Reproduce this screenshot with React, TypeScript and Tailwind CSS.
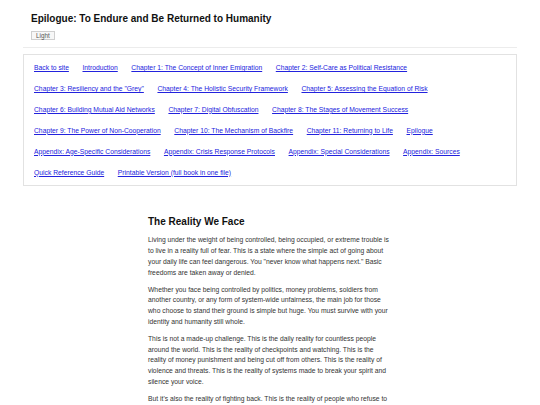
import React from "react";

const links = [
  "Back to site",
  "Introduction",
  "Chapter 1: The Concept of Inner Emigration",
  "Chapter 2: Self-Care as Political Resistance",
  'Chapter 3: Resiliency and the "Grey"',
  "Chapter 4: The Holistic Security Framework",
  "Chapter 5: Assessing the Equation of Risk",
  "Chapter 6: Building Mutual Aid Networks",
  "Chapter 7: Digital Obfuscation",
  "Chapter 8: The Stages of Movement Success",
  "Chapter 9: The Power of Non-Cooperation",
  "Chapter 10: The Mechanism of Backfire",
  "Chapter 11: Returning to Life",
  "Epilogue",
  "Appendix: Age-Specific Considerations",
  "Appendix: Crisis Response Protocols",
  "Appendix: Special Considerations",
  "Appendix: Sources",
  "Quick Reference Guide",
  "Printable Version (full book in one file)",
];

const paragraphs = [
  'Living under the weight of being controlled, being occupied, or extreme trouble is to live in a reality full of fear. This is a state where the simple act of going about your daily life can feel dangerous. You "never know what happens next." Basic freedoms are taken away or denied.',
  "Whether you face being controlled by politics, money problems, soldiers from another country, or any form of system-wide unfairness, the main job for those who choose to stand their ground is simple but huge. You must survive with your identity and humanity still whole.",
  "This is not a made-up challenge. This is the daily reality for countless people around the world. This is the reality of checkpoints and watching. This is the reality of money punishment and being cut off from others. This is the reality of violence and threats. This is the reality of systems made to break your spirit and silence your voice.",
  "But it's also the reality of fighting back. This is the reality of people who refuse to let the weight of control define who they are. This is the reality of quiet courage.",
];

export default function App() {
  return (
    <div className="min-h-screen bg-white font-['Liberation_Sans',Arial,sans-serif] text-[#333]">
      <div className="mx-auto w-[494px]">
        <header className="px-[8px] pt-[13px] pb-[7px] border-b border-[#ececec]">
          <h1 className="text-[10px] font-bold leading-[12px] text-[#111]">
            Epilogue: To Endure and Be Returned to Humanity
          </h1>
          <button className="mt-[6px] block h-[9px] border border-[#cfcfcf] bg-[#f7f7f7] px-[4px] text-[6.3px] leading-[7px] text-[#555]">
            Light
          </button>
        </header>
        <nav className="mt-[6px] border border-[#e2e2e2] px-[10px] pt-[3px] pb-[2px]">
          <div className="flex flex-wrap gap-x-[13.6px]">
            {links.map((l) => (
              <a
                key={l}
                href="#"
                className="text-[6.75px] leading-[20.9px] text-[#2222dd] underline"
              >
                {l}
              </a>
            ))}
          </div>
        </nav>
      </div>
      <main className="mx-auto w-[244px] pt-[30px]">
        <h2 className="text-[10px] font-bold leading-[12px] text-[#111] mb-[7px]">
          The Reality We Face
        </h2>
        {paragraphs.map((p, i) => (
          <p key={i} className="text-[6.75px] leading-[10.8px] mb-[6px]">
            {p}
          </p>
        ))}
      </main>
    </div>
  );
}
